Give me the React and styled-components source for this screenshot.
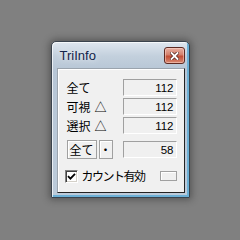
import React from "react";
import styled, { createGlobalStyle } from "styled-components";

const Global = createGlobalStyle`
  html, body {
    margin: 0;
    padding: 0;
    background: #808080;
  }
`;

const Desktop = styled.div`
  width: 240px;
  height: 240px;
  display: flex;
  align-items: center;
  justify-content: center;
  background: #808080;
`;

const Window = styled.div`
  box-sizing: border-box;
  width: 139px;
  height: 157px;
  margin-top: -1px;
  display: flex;
  flex-direction: column;
  border: 1px solid #3a434d;
  border-radius: 5px 5px 1px 1px;
  background: linear-gradient(180deg, #dfe7ef 0px, #c3d0dd 14px, #b7c6d6 28px, #bccbda 100%);
  box-shadow: 0 0 7px 2px rgba(40, 40, 40, 0.45), inset 1px 1px 0 rgba(255, 255, 255, 0.7),
    inset -2px -2px 0 #6cb0d6;
  padding: 0 4px 4px 5px;
`;

const TitleBar = styled.div`
  height: 26px;
  display: flex;
  align-items: center;
  justify-content: space-between;
  padding-left: 3px;
`;

const Title = styled.span`
  font-family: "Liberation Sans", Arial, sans-serif;
  font-size: 13px;
  color: #14244a;
  margin-top: 1px;
  text-shadow: 0 0 6px rgba(255, 255, 255, 0.9);
`;

const CloseButton = styled.div`
  box-sizing: border-box;
  width: 21px;
  height: 17px;
  margin-top: 1px;
  border: 1px solid #5d2a22;
  border-radius: 3px;
  background: linear-gradient(180deg, #e8b0a2 0%, #d4806c 45%, #c24e36 55%, #d98a72 100%);
  box-shadow: inset 0 0 0 1px rgba(255, 220, 210, 0.5);
  display: flex;
  align-items: center;
  justify-content: center;
`;

const Client = styled.div`
  flex: 1;
  display: flex;
  flex-direction: column;
  background: #f0f0f0;
  border: 1px solid;
  border-color: #9aa3ad #222 #222 #9aa3ad;
  box-shadow: inset 1px 1px 0 #fff;
  padding: 10px 7px 0 9px;
  font-family: "Noto Sans CJK JP", "Liberation Sans", sans-serif;
  font-size: 12px;
  color: #000;
`;

const Rows = styled.div`
  display: flex;
  flex-direction: column;
  gap: 2px;
`;

const Row = styled.div`
  display: flex;
  align-items: center;
  justify-content: space-between;
  height: 17px;
`;

const Label = styled.span`
  line-height: 17px;
  white-space: pre;
`;

const Mark = styled.span`
  margin-left: 4px;
`;

const Field = styled.div`
  box-sizing: border-box;
  width: ${(p) => p.$w || 54}px;
  height: ${(p) => p.$h || 17}px;
  border: 1px solid;
  border-color: #a0a0a0 #fff #fff #a0a0a0;
  background: #f0f0f0;
  display: flex;
  align-items: center;
  justify-content: flex-end;
  padding-right: 2px;
  font-family: "Liberation Sans", Arial, sans-serif;
  font-size: 11.5px;
`;

const Swatch = styled.div`
  box-sizing: border-box;
  width: 17px;
  height: 10px;
  border: 1px solid #a0a0a0;
  box-shadow: inset 1px 1px 0 #fff;
  background: #f0f0f0;
`;

const ButtonRow = styled.div`
  display: flex;
  align-items: center;
  margin-top: 6px;
  height: 19px;
`;

const Button = styled.div`
  box-sizing: border-box;
  width: ${(p) => p.$w}px;
  height: 19px;
  margin-right: 2px;
  border: 1px solid #a0a0a0;
  background: #f0f0f0;
  box-shadow: inset 1px 1px 0 #fff;
  display: flex;
  align-items: center;
  justify-content: center;
  line-height: 17px;
`;

const Spacer = styled.div`
  flex: 1;
`;

const CheckRow = styled.div`
  display: flex;
  align-items: center;
  margin-top: 10px;
  margin-left: -2px;
  height: 14px;
`;

const CheckBox = styled.div`
  box-sizing: border-box;
  width: 13px;
  height: 13px;
  border: 1px solid;
  border-color: #808080 #fff #fff #808080;
  box-shadow: inset 1px 1px 0 #404040, inset -1px -1px 0 #d4d0c8;
  background: #fff;
  display: flex;
  align-items: center;
  justify-content: center;
  margin-right: 4px;
`;

const CheckLabel = styled.span`
  line-height: 14px;
  letter-spacing: -1.5px;
`;

export default function App() {
  return (
    <>
      <Global />
      <Desktop>
        <Window>
          <TitleBar>
            <Title>TriInfo</Title>
            <CloseButton>
              <svg width="9" height="8" viewBox="0 0 9 8">
                <path d="M1.5 1 L7.5 7 M7.5 1 L1.5 7" stroke="#5a2a22" strokeWidth="3.4" strokeLinecap="square" />
                <path d="M1.5 1 L7.5 7 M7.5 1 L1.5 7" stroke="#fff" strokeWidth="1.8" strokeLinecap="square" />
              </svg>
            </CloseButton>
          </TitleBar>
          <Client>
            <Rows>
              <Row>
                <Label>全て</Label>
                <Field>112</Field>
              </Row>
              <Row>
                <Label>
                  可視<Mark>△</Mark>
                </Label>
                <Field>112</Field>
              </Row>
              <Row>
                <Label>
                  選択<Mark>△</Mark>
                </Label>
                <Field>112</Field>
              </Row>
            </Rows>
            <ButtonRow>
              <Button $w={30}>全て</Button>
              <Button $w={14}>・</Button>
              <Spacer />
              <Field>58</Field>
            </ButtonRow>
            <CheckRow>
              <CheckBox>
                <svg width="9" height="9" viewBox="0 0 9 9">
                  <path d="M1 4.2 L3.4 6.6 L8 1.8" fill="none" stroke="#000" strokeWidth="1.8" />
                </svg>
              </CheckBox>
              <CheckLabel>カウント有効</CheckLabel>
              <Spacer />
              <Swatch />
            </CheckRow>
          </Client>
        </Window>
      </Desktop>
    </>
  );
}
